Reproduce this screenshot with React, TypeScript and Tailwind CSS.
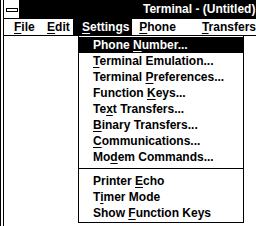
import type { ReactNode } from 'react';

const font = { fontFamily: '"Liberation Sans", Arial, sans-serif' };

function Key({ children }: { children: ReactNode }) {
  return <span className="underline decoration-1 underline-offset-[2px]">{children}</span>;
}

type Item = { pre: string; key: string; post: string; active?: boolean } | 'sep';

const items: Item[] = [
  { pre: 'Phone ', key: 'N', post: 'umber...', active: true },
  { pre: '', key: 'T', post: 'erminal Emulation...' },
  { pre: 'Terminal ', key: 'P', post: 'references...' },
  { pre: 'Function ', key: 'K', post: 'eys...' },
  { pre: 'Te', key: 'x', post: 't Transfers...' },
  { pre: '', key: 'B', post: 'inary Transfers...' },
  { pre: '', key: 'C', post: 'ommunications...' },
  { pre: 'Mo', key: 'd', post: 'em Commands...' },
  'sep',
  { pre: 'Printer ', key: 'E', post: 'cho' },
  { pre: 'T', key: 'i', post: 'mer Mode' },
  { pre: 'Show ', key: 'F', post: 'unction Keys' },
];

export default function App() {
  return (
    <div
      className="relative h-[226px] w-[256px] overflow-hidden border-l border-black bg-white pl-[2px] text-[12px] font-bold text-black"
      style={font}
    >
      <div className="flex h-full flex-col border-l border-black">
        {/* title bar */}
        <div className="flex h-[19px] border-b border-black">
          <div className="flex w-[15px] items-start bg-white pl-[2px] pt-[8px]">
            <div className="h-[4px] w-[12px] border border-black bg-white" />
          </div>
          <div className="flex-1 bg-black pl-[124px] leading-[18px] whitespace-nowrap text-white">
            Terminal - (Untitled)
          </div>
        </div>

        {/* menu bar */}
        <div className="flex h-[17px] border-b border-black pl-[2px] leading-[16px] whitespace-nowrap">
          <div className="w-[35px] pl-[8px]">
            <Key>F</Key>ile
          </div>
          <div className="w-[36px] pl-[8px]">
            <Key>E</Key>dit
          </div>
          <div className="w-[63px] bg-black pl-[9px] text-white">
            <Key>S</Key>ettings
          </div>
          <div className="w-[66px] pl-[7px]">
            <Key>P</Key>hone
          </div>
          <div className="pl-[8px]">
            <Key>T</Key>ransfers
          </div>
        </div>
      </div>

      {/* Settings dropdown */}
      <div className="absolute top-[35px] left-[77px] w-[166px] border border-black bg-white py-[1px]">
        {items.map((it, i) =>
          it === 'sep' ? (
            <div key={i} className="h-[8px] pt-[3px]">
              <div className="h-px bg-black" />
            </div>
          ) : (
            <div
              key={i}
              className={`h-[16px] pl-[14px] leading-[16px] whitespace-nowrap ${it.active ? 'bg-black text-white' : ''}`}
            >
              {it.pre}
              <Key>{it.key}</Key>
              {it.post}
            </div>
          ),
        )}
      </div>
    </div>
  );
}
